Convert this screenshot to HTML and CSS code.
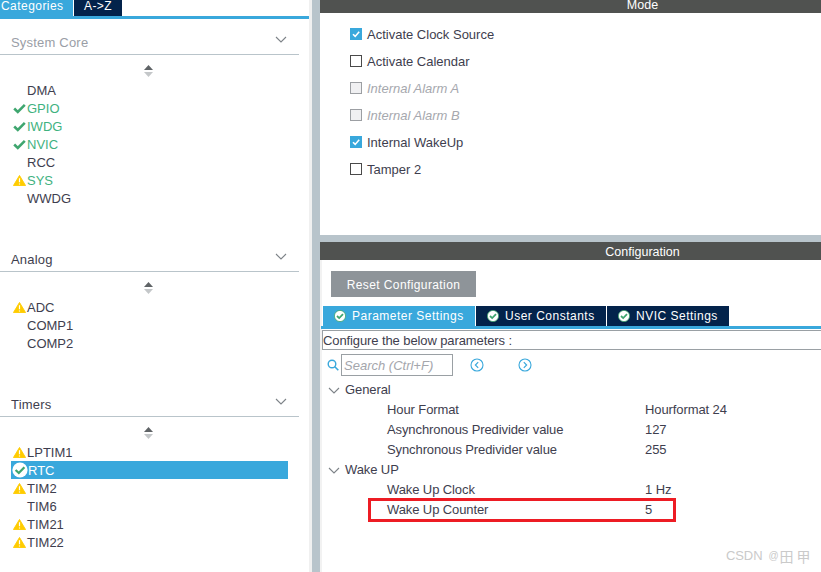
FILE: index.html
```html
<!DOCTYPE html>
<html lang="en">
<head>
<meta charset="utf-8">
<title>RTC Configuration</title>
<link rel="stylesheet" href="styles.css">
</head>
<body>
<svg class="defs" width="0" height="0" aria-hidden="true">
  <symbol id="warn" viewBox="0 0 14 12"><path d="M7 .5 13.6 11.5H.4Z" fill="#ffcc00" stroke="#ffcc00" stroke-linejoin="round"/><path d="M7 3.5V8M7 9.2v1.2" stroke="#fff" stroke-width="1.3"/></symbol>
  <symbol id="tick" viewBox="0 0 13 10"><path d="M1.2 5 4.8 8.4 11.8 1.4" fill="none" stroke="#3fa66f" stroke-width="2.6"/></symbol>
  <symbol id="okdot" viewBox="0 0 12 12"><circle cx="6" cy="6" r="5.6" fill="#fff" stroke="#3fa66f" stroke-width=".8"/><path d="M3 6 5.2 8.1 9 4.2" fill="none" stroke="#3fa66f" stroke-width="1.8"/></symbol>
  <symbol id="chev" viewBox="0 0 12 7"><path d="M1 1 6 6 11 1" fill="none" stroke="#7d8388" stroke-width="1.1"/></symbol>
  <symbol id="sort" viewBox="0 0 9 12"><path d="M4.5 0 9 5H0Z" fill="#5f6366"/><path d="M4.5 12 9 7H0Z" fill="#c4c7c9"/></symbol>
</svg>
<div class="app">
  <aside class="left">
    <div class="cat-tabs">
      <div class="cat-tab active">Categories</div>
      <div class="cat-tab">A-&gt;Z</div>
    </div>
    <section class="group first">
      <div class="group-head muted"><span>System Core</span><svg class="chev"><use href="#chev"/></svg></div>
      <svg class="sort"><use href="#sort"/></svg>
      <ul class="items">
        <li><span class="ico"></span>DMA</li>
        <li class="good"><svg class="ico"><use href="#tick"/></svg>GPIO</li>
        <li class="good"><svg class="ico"><use href="#tick"/></svg>IWDG</li>
        <li class="good"><svg class="ico"><use href="#tick"/></svg>NVIC</li>
        <li><span class="ico"></span>RCC</li>
        <li class="good"><svg class="ico"><use href="#warn"/></svg>SYS</li>
        <li><span class="ico"></span>WWDG</li>
      </ul>
    </section>
    <section class="group">
      <div class="group-head"><span>Analog</span><svg class="chev"><use href="#chev"/></svg></div>
      <svg class="sort"><use href="#sort"/></svg>
      <ul class="items">
        <li><svg class="ico"><use href="#warn"/></svg>ADC</li>
        <li><span class="ico"></span>COMP1</li>
        <li><span class="ico"></span>COMP2</li>
      </ul>
    </section>
    <section class="group">
      <div class="group-head"><span>Timers</span><svg class="chev"><use href="#chev"/></svg></div>
      <svg class="sort"><use href="#sort"/></svg>
      <ul class="items">
        <li><svg class="ico"><use href="#warn"/></svg>LPTIM1</li>
        <li class="selected"><svg class="ico-ok" viewBox="0 0 16 16"><circle cx="8" cy="8" r="7.6" fill="#fff"/><path d="M3.6 8 6.8 11 12.4 5.2" fill="none" stroke="#3fa66f" stroke-width="2.3"/></svg>RTC</li>
        <li><svg class="ico"><use href="#warn"/></svg>TIM2</li>
        <li><span class="ico"></span>TIM6</li>
        <li><svg class="ico"><use href="#warn"/></svg>TIM21</li>
        <li><svg class="ico"><use href="#warn"/></svg>TIM22</li>
      </ul>
    </section>
  </aside>
  <div class="gutter"></div>
  <main class="right">
    <section class="mode">
      <header class="bar bar-mode"><span>Mode</span></header>
      <div class="checks">
        <label class="check"><span class="box on"><svg viewBox="0 0 12 12"><path d="M3 6.2 5.2 8.4 9.2 3.8" fill="none" stroke="#fff" stroke-width="1.6"/></svg></span>Activate Clock Source</label>
        <label class="check"><span class="box"></span>Activate Calendar</label>
        <label class="check disabled"><span class="box"></span>Internal Alarm A</label>
        <label class="check disabled"><span class="box"></span>Internal Alarm B</label>
        <label class="check"><span class="box on"><svg viewBox="0 0 12 12"><path d="M3 6.2 5.2 8.4 9.2 3.8" fill="none" stroke="#fff" stroke-width="1.6"/></svg></span>Internal WakeUp</label>
        <label class="check"><span class="box"></span>Tamper 2</label>
      </div>
    </section>
    <section class="config">
      <header class="bar bar-config">Configuration</header>
      <div class="config-body">
        <button class="reset" type="button">Reset Configuration</button>
        <div class="tabs">
          <div class="tab active tab-a"><svg class="tab-ico"><use href="#okdot"/></svg>Parameter Settings</div>
          <div class="tab tab-b"><svg class="tab-ico"><use href="#okdot"/></svg>User Constants</div>
          <div class="tab tab-c"><svg class="tab-ico"><use href="#okdot"/></svg>NVIC Settings</div>
        </div>
        <div class="desc">Configure the below parameters :</div>
        <div class="search-row">
          <svg class="mag" viewBox="0 0 12 12"><circle cx="5" cy="5" r="3.8" fill="none" stroke="#39a8dc" stroke-width="1.4"/><path d="M7.8 7.8 11.3 11.3" stroke="#39a8dc" stroke-width="1.6"/></svg>
          <div class="search">Search (Ctrl+F)</div>
          <svg class="nav nav-prev" viewBox="0 0 14 14"><circle cx="7" cy="7" r="6" fill="none" stroke="#39a8dc" stroke-width="1.1"/><path d="M8.2 4.2 5.4 7 8.2 9.8" fill="none" stroke="#39a8dc" stroke-width="1.2"/></svg>
          <svg class="nav nav-next" viewBox="0 0 14 14"><circle cx="7" cy="7" r="6" fill="none" stroke="#39a8dc" stroke-width="1.1"/><path d="M5.8 4.2 8.6 7 5.8 9.8" fill="none" stroke="#39a8dc" stroke-width="1.2"/></svg>
        </div>
        <div class="tree">
          <div class="node"><svg class="node-chev"><use href="#chev"/></svg>General</div>
          <div class="leaf"><span class="k">Hour Format</span><span>Hourformat 24</span></div>
          <div class="leaf"><span class="k">Asynchronous Predivider value</span><span>127</span></div>
          <div class="leaf"><span class="k">Synchronous Predivider value</span><span>255</span></div>
          <div class="node"><svg class="node-chev"><use href="#chev"/></svg>Wake UP</div>
          <div class="leaf"><span class="k">Wake Up Clock</span><span>1 Hz</span></div>
          <div class="leaf marked"><span class="k">Wake Up Counter</span><span>5</span><div class="redbox"></div></div>
        </div>
      </div>
    </section>
  </main>
</div>
<div class="watermark"><span>CSDN</span><span class="wm-at">@</span><span class="wm-cjk">田甲</span></div>
</body>
</html>
```
FILE: styles.css
```css
* { box-sizing: border-box; }
html, body { margin: 0; padding: 0; height: 100%; overflow: hidden; background: #fff; }
body { font-family: "Liberation Sans", Arial, sans-serif; font-size: 13px; color: #3e3e4e; }
.defs { position: absolute; }
.app { display: flex; height: 572px; }

.left { width: 309px; flex: none; background: #fff; }
.cat-tabs { display: flex; gap: 1px; height: 19px; width: 311px; border-bottom: 3px solid #39a8dc; }
.cat-tab { width: 48px; height: 16px; background: #03234b; color: #fff; font-size: 12px; letter-spacing: .45px; line-height: 12px; text-align: center; overflow: hidden; }
.cat-tab.active { width: 73px; padding-left: 1px; text-align: left; background: #39a8dc; }

.group { height: 145px; }
.group.first { height: 217px; }
.group-head { width: 299px; height: 36px; padding: 0 12px 2px 11px; display: flex; align-items: flex-end; justify-content: space-between; border-bottom: 1px solid #b9c4ca; font-size: 13px; line-height: 18px; letter-spacing: .2px; }
.group-head.muted { color: #9a9ea6; }
.chev { width: 12px; height: 7px; margin-bottom: 9px; }
.sort { display: block; width: 9px; height: 12px; margin: 10px 0 0 144px; }
.items { list-style: none; margin: 4px 0 0; padding: 0; }
.items li { display: flex; align-items: center; height: 18px; width: 288px; padding: 2px 0 0 13px; font-size: 13px; line-height: 16px; }
.ico { width: 13px; height: 11px; margin: -2px 1px 0 0; flex: none; }
.good { color: #3fb27f; }
.items li.selected { margin-left: 11px; width: 277px; padding-left: 1px; background: #39a8dc; color: #fff; }
.ico-ok { width: 16px; height: 16px; margin: -2px 0 0; flex: none; }

.gutter { width: 11px; flex: none; background: linear-gradient(to right, #f0f0f0 0 3px, #b8c4cb 3px); }

.right { flex: 1; min-width: 0; display: flex; flex-direction: column; background: #b8c4cb; }
.bar { padding-left: 144px; background: #505250; color: #fff; text-align: center; font-size: 12.5px; overflow: hidden; }
.mode { height: 235px; background: #fff; }
.bar-mode { height: 13px; line-height: 10px; }
.checks { padding: 7px 0 0 30px; display: flex; flex-direction: column; }
.check { display: flex; align-items: center; height: 27px; padding-top: 2px; font-size: 13px; line-height: 15px; }
.box { width: 12px; height: 12px; margin: -1px 5px 0 0; border: 1px solid #4a4a4a; flex: none; }
.box.on { background: #39a8dc; border-color: #39a8dc; }
.box svg { display: block; width: 12px; height: 12px; margin: -1px; }
.disabled { color: #a6a8ae; font-style: italic; }
.disabled .box { background: #f0f0f2; border-color: #9c9fa3; }

.config { margin-top: 7px; flex: 1; background: #fff; }
.bar-config { height: 18px; line-height: 20px; }
.config-body { padding: 11px 0 0 1px; background: linear-gradient(to right, #f2f2f2 0 2px, #fff 2px); height: 312px; }
.reset { display: block; width: 145px; height: 26px; margin: 0 0 9px 10px; padding: 2px 0 0; border: 0; background: #8e9499; color: #fff; font: 12px "Liberation Sans", Arial, sans-serif; letter-spacing: .4px; }
.tabs { display: flex; gap: 1px; height: 23px; padding-left: 2px; border-bottom: 3px solid #39a8dc; }
.tab { height: 20px; display: flex; align-items: center; padding-left: 11px; background: #03234b; color: #fff; font-size: 12px; letter-spacing: .5px; }
.tab.active { background: #39a8dc; }
.tab-a { width: 152px; }
.tab-b { width: 130px; }
.tab-c { width: 122px; }
.tab-ico { width: 12px; height: 12px; margin-right: 6px; flex: none; }
.desc { margin: 1px 0 0 1px; height: 20px; line-height: 19px; border: 1px solid #9aa0a4; border-right: 0; font-size: 13px; letter-spacing: -.1px; }
.search-row { display: flex; align-items: center; height: 22px; margin-top: 4px; padding-left: 6px; }
.mag { width: 12px; height: 12px; flex: none; margin-right: 2px; }
.search { width: 112px; height: 22px; line-height: 21px; padding-left: 2px; border: 1px solid #9aa0a4; color: #a4a6ac; font-style: italic; font-size: 13px; }
.nav { width: 14px; height: 14px; flex: none; }
.nav-prev { margin-left: 17px; }
.nav-next { margin-left: 34px; }

.tree { margin-top: 3px; }
.node, .leaf { height: 20px; display: flex; align-items: center; padding-top: 2px; font-size: 13px; line-height: 18px; letter-spacing: -.1px; }
.node { padding-left: 7px; }
.node-chev { width: 12px; height: 7px; margin: 0 5px 0 0; flex: none; }
.leaf { padding-left: 66px; position: relative; }
.k { width: 258px; flex: none; }
.redbox { position: absolute; left: 47px; top: -1px; width: 308px; height: 24px; border: 3px solid #ed1c24; pointer-events: none; }
.watermark { position: absolute; left: 726px; top: 547px; display: flex; align-items: center; color: #cacaca; font-size: 13px; line-height: 18px; white-space: nowrap; letter-spacing: -.1px; }
.wm-at { margin-left: 6px; font-size: 10px; }
.wm-cjk { margin-left: 1px; font-family: "Noto Sans CJK SC", sans-serif; font-size: 14px; letter-spacing: 3px; }
```
